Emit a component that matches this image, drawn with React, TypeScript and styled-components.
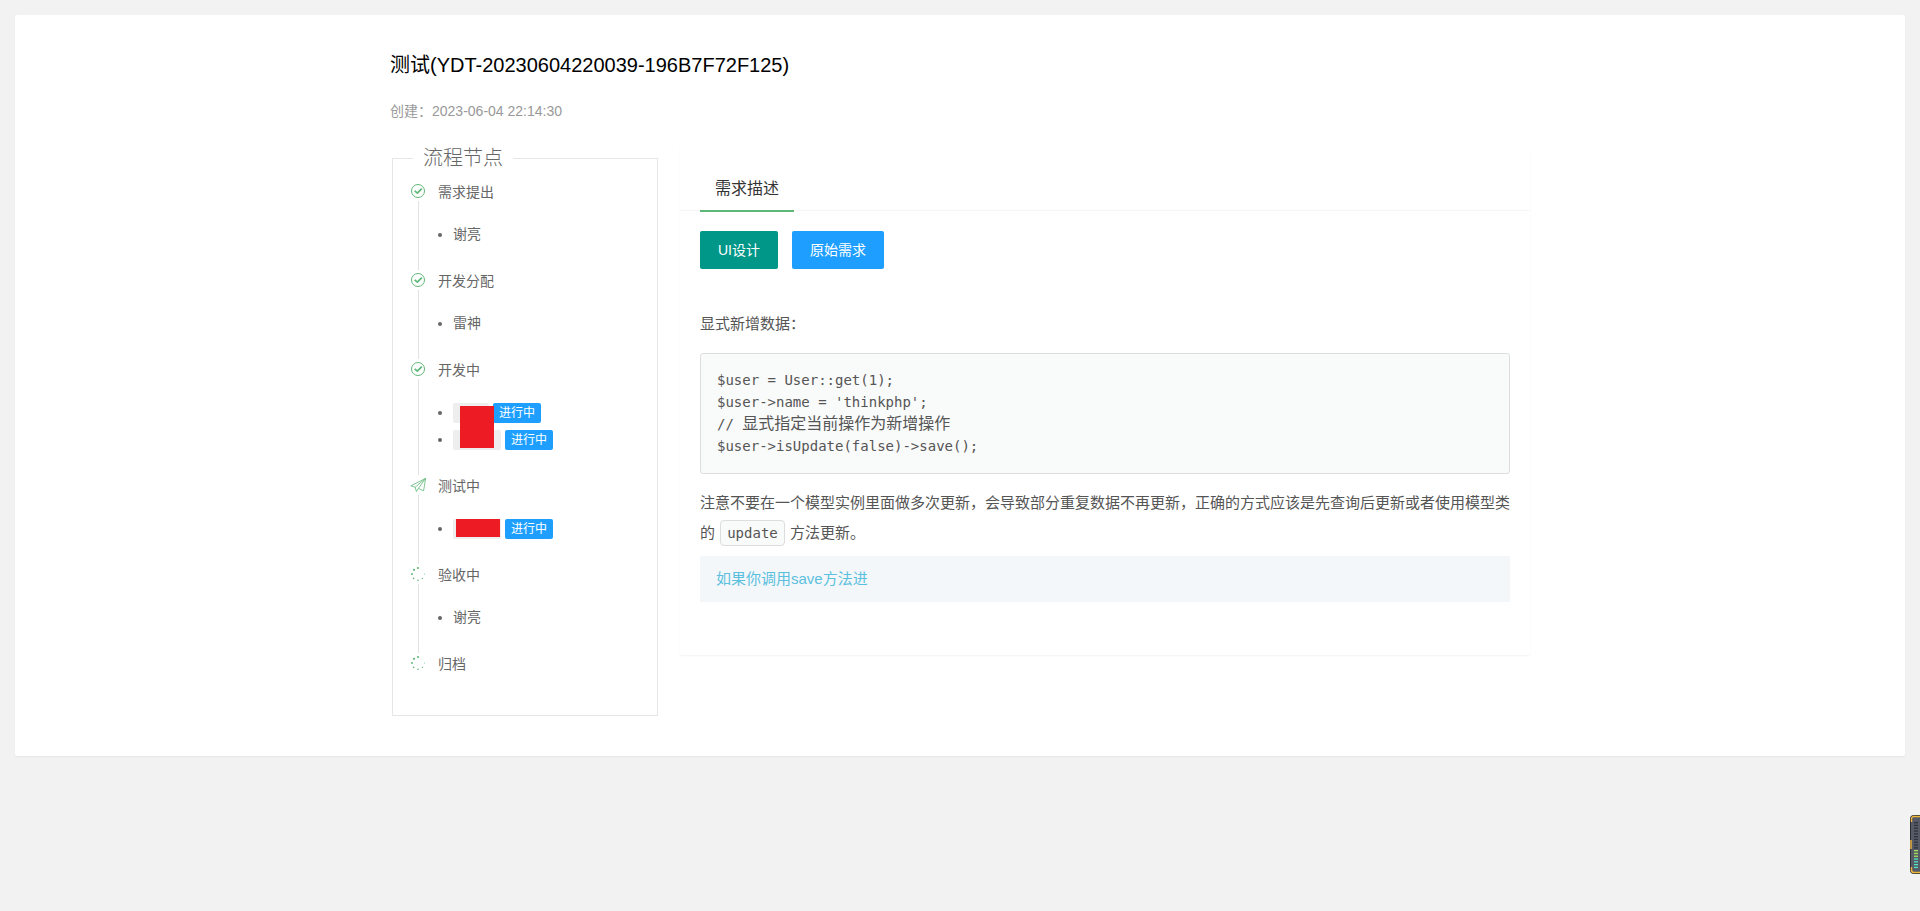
import React from "react";
import styled, { createGlobalStyle } from "styled-components";

const SANS = `"Liberation Sans", Arial, "Noto Sans CJK SC", sans-serif`;
const MONO = `"DejaVu Sans Mono", "Noto Sans CJK SC", monospace`;
const GREEN = "#5fb878";

const GlobalStyle = createGlobalStyle`
  *, *::before, *::after { box-sizing: border-box; }
  body {
    margin: 0;
    background: #f2f2f2;
    color: #555;
    font: 14px/20px ${SANS};
  }
  h1, h2, p, ul, ol, pre, blockquote { margin: 0; padding: 0; font-weight: 400; }
`;

const Page = styled.main`
  padding: 15px;
`;

const Card = styled.section`
  padding: 35px 15px 40px;
  border-radius: 2px;
  background: #fff;
  box-shadow: 0 1px 2px rgba(0, 0, 0, 0.05);
`;

const Container = styled.div`
  max-width: 1140px;
  margin: 0 auto;
`;

const Title = styled.h1`
  color: #000;
  font-size: 20px;
  line-height: 30px;
`;

const Created = styled.p`
  margin: 21px 0 26px;
  color: #999;
`;

const Columns = styled.div`
  display: flex;
  align-items: flex-start;
  gap: 20px;
`;

const Flow = styled.fieldset`
  flex: 0 0 266px;
  margin: 0 2px;
  padding: 11px 15px 40px;
  border: 1px solid #e6e6e6;
`;

const FlowTitle = styled.legend`
  margin-left: 5px;
  padding: 0 10px;
  color: #666;
  font-size: 20px;
  font-weight: 300;
  line-height: 23px;
`;

const Timeline = styled.ol`
  list-style: none;
`;

const Step = styled.li`
  display: flex;
  gap: 10px;
  color: #666;
`;

const Rail = styled.div`
  display: flex;
  flex: 0 0 20px;
  flex-direction: column;
  align-items: center;

  svg {
    display: block;
    width: 20px;
    height: 20px;
  }
`;

const Line = styled.span`
  flex: 1;
  width: 1px;
  background: #e2e2e2;
`;

const StepTitle = styled.h2`
  font-size: 14px;
  line-height: 22px;
`;

const People = styled.ul`
  position: relative;
  padding: 18px 0 22px 15px;
  line-height: 27px;
  list-style: disc;
`;

const Tag = styled.span`
  display: inline-block;
  height: 20px;
  margin-left: 4px;
  padding: 0 6px;
  border-radius: 2px;
  background: #1e9fff;
  color: #fff;
  font-size: 12px;
  line-height: 20px;
  vertical-align: middle;
`;

const NameTag = styled.span<{ $chars: number }>`
  display: inline-block;
  width: ${(p) => p.$chars * 12 + 12}px;
  height: 20px;
  border-radius: 2px;
  background: #eee;
  vertical-align: middle;
`;

const Redaction = styled.li<{ $x: number; $y: number; $w: number; $h: number }>`
  position: absolute;
  left: ${(p) => p.$x}px;
  top: ${(p) => p.$y}px;
  width: ${(p) => p.$w}px;
  height: ${(p) => p.$h}px;
  background: #ed1c24;
  list-style: none;
`;

const Detail = styled.article`
  flex: 1;
  min-width: 0;
  border-radius: 2px;
  background: #fff;
  box-shadow: 0 1px 2px rgba(0, 0, 0, 0.05);
`;

const TabBar = styled.div`
  display: flex;
  padding: 0 20px;
  border-bottom: 1px solid #f6f6f6;
`;

const Tab = styled.button`
  margin: 0 0 -2px;
  padding: 20px 15px 0;
  border: 0;
  border-bottom: 2px solid ${GREEN};
  background: none;
  color: #333;
  font-family: inherit;
  font-size: 16px;
  line-height: 43px;
`;

const Body = styled.div`
  padding: 20px 20px 53px;
  font-size: 15px;
  line-height: 30px;
`;

const Actions = styled.div`
  display: flex;
  gap: 14px;
  margin-bottom: 40px;
`;

const Action = styled.button<{ $color: string }>`
  height: 38px;
  padding: 0 18px;
  border: 0;
  border-radius: 2px;
  background: ${(p) => p.$color};
  color: #fff;
  font-family: inherit;
  font-size: 14px;
  line-height: 38px;
`;

const CodeBlock = styled.pre`
  margin: 14px 0;
  padding: 15px 16px 16px;
  border: 1px solid #ddd;
  border-radius: 3px;
  background: #f9fafa;
  font-family: ${MONO};
  font-size: 14px;
  line-height: 22px;
`;

const Wide = styled.span`
  font-size: 16px;
  line-height: 20px;
`;

const Code = styled.code`
  margin: 0 1px;
  padding: 4px 6px;
  border: 1px solid #ddd;
  border-radius: 4px;
  background: #f9fafa;
  font-family: ${MONO};
  font-size: 14px;
  line-height: 20px;
`;

const Hint = styled.blockquote`
  margin-top: 8px;
  padding: 8px 16px;
  background: #f3f7fa;
  color: #5bc0de;
`;

const Meter = styled.aside`
  position: fixed;
  right: 0;
  bottom: 37px;
  width: 10px;
  height: 59px;

  svg {
    display: block;
  }
`;

type IconKind = "done" | "send" | "wait";

function StepIcon({ kind }: { kind: IconKind }) {
  if (kind === "done") {
    return (
      <svg viewBox="0 0 20 20" fill="none" stroke={GREEN} aria-hidden="true">
        <circle cx="10" cy="10" r="6.5" strokeWidth="1" />
        <path d="M6.6 9.8 9.4 12.2 13.8 7.6" strokeWidth="1.7" />
      </svg>
    );
  }
  if (kind === "send") {
    return (
      <svg viewBox="0 0 20 20" fill="none" stroke={GREEN} strokeWidth="0.8" strokeLinejoin="round" aria-hidden="true">
        <path d="M17.6 3.4 2.8 10.8 7.2 12.2 17.6 3.4 10.4 13.4 15.6 15.8Z" />
        <path d="M7.2 12.2 8.4 16.6 10.4 13.4" />
      </svg>
    );
  }
  return (
    <svg viewBox="0 0 20 20" fill={GREEN} aria-hidden="true">
      <circle cx="10" cy="4" r="1.1" />
      <circle cx="6" cy="5.8" r="1.1" />
      <circle cx="4" cy="10" r="1" />
      <circle cx="5.6" cy="14.4" r="0.8" />
      <circle cx="10" cy="16.2" r="0.8" />
      <circle cx="14.4" cy="14.4" r="0.6" />
      <circle cx="16.4" cy="10" r="0.5" />
      <circle cx="14.8" cy="6" r="0.3" />
    </svg>
  );
}

function Node({ icon, title, last, children }: { icon: IconKind; title: string; last?: boolean; children?: React.ReactNode }) {
  return (
    <Step>
      <Rail>
        <StepIcon kind={icon} />
        {!last && <Line />}
      </Rail>
      <div>
        <StepTitle>{title}</StepTitle>
        {children && <People>{children}</People>}
      </div>
    </Step>
  );
}

function Worker({ chars }: { chars: number }) {
  return (
    <li>
      <NameTag $chars={chars} />
      <Tag>进行中</Tag>
    </li>
  );
}

const METER_BARS = Array.from({ length: 17 }, (_, i) => i);

function LevelMeter() {
  return (
    <Meter aria-hidden="true">
      <svg width="10" height="59" viewBox="0 0 10 59">
        <rect x="0.5" y="0.5" width="14" height="58" rx="3" fill="#555a66" stroke="#2b2d33" />
        <path d="M1.5 7V4Q1.5 1.5 4 1.5H10M1.5 52V55Q1.5 57.5 4 57.5H10M1 25V34" fill="none" stroke="#f0b63a" strokeWidth="1.4" />
        {METER_BARS.map((i) => (
          <rect
            key={i}
            x="4"
            y={7 + i * 2.8}
            width="4"
            height="1.3"
            fill={i < 10 ? "#30333c" : i < 13 ? "#a6e05a" : "#4fe3c0"}
          />
        ))}
      </svg>
    </Meter>
  );
}

export default function App() {
  return (
    <>
      <GlobalStyle />
      <Page>
        <Card>
          <Container>
            <Title>测试(YDT-20230604220039-196B7F72F125)</Title>
            <Created>创建：2023-06-04 22:14:30</Created>
            <Columns>
              <Flow>
                <FlowTitle>流程节点</FlowTitle>
                <Timeline>
                  <Node icon="done" title="需求提出">
                    <li>谢亮</li>
                  </Node>
                  <Node icon="done" title="开发分配">
                    <li>雷神</li>
                  </Node>
                  <Node icon="done" title="开发中">
                    <Worker chars={2} />
                    <Worker chars={3} />
                    <Redaction $x={22} $y={25} $w={34} $h={42} />
                  </Node>
                  <Node icon="send" title="测试中">
                    <Worker chars={3} />
                    <Redaction $x={18} $y={22} $w={44} $h={18} />
                  </Node>
                  <Node icon="wait" title="验收中">
                    <li>谢亮</li>
                  </Node>
                  <Node icon="wait" title="归档" last />
                </Timeline>
              </Flow>
              <Detail>
                <TabBar>
                  <Tab type="button">需求描述</Tab>
                </TabBar>
                <Body>
                  <Actions>
                    <Action type="button" $color="#009688">UI设计</Action>
                    <Action type="button" $color="#1e9fff">原始需求</Action>
                  </Actions>
                  <p>显式新增数据：</p>
                  <CodeBlock>
                    {"$user = User::get(1);\n$user->name = 'thinkphp';\n// "}
                    <Wide>显式指定当前操作为新增操作</Wide>
                    {"\n$user->isUpdate(false)->save();"}
                  </CodeBlock>
                  <p>
                    注意不要在一个模型实例里面做多次更新，会导致部分重复数据不再更新，正确的方式应该是先查询后更新或者使用模型类的 <Code>update</Code> 方法更新。
                  </p>
                  <Hint>如果你调用save方法进</Hint>
                </Body>
              </Detail>
            </Columns>
          </Container>
        </Card>
      </Page>
      <LevelMeter />
    </>
  );
}
